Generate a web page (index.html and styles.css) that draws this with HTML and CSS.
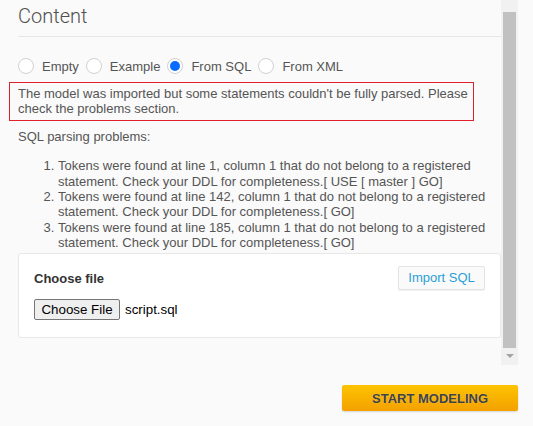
FILE: index.html
```html
<!DOCTYPE html>
<html>
<head>
<meta charset="utf-8">
<link rel="stylesheet" href="styles.css">
</head>
<body>
<div class="frame">
  <div class="viewport">
    <div class="content">
      <h2 class="heading">Content</h2>
      <div class="radios">
        <label class="radio"><span class="circle"></span><span>Empty</span></label>
        <label class="radio"><span class="circle"></span><span>Example</span></label>
        <label class="radio"><span class="circle checked"></span><span>From SQL</span></label>
        <label class="radio"><span class="circle"></span><span>From XML</span></label>
      </div>
      <div class="alert">The model was imported but some statements couldn't be fully parsed. Please check the problems section.</div>
      <p class="problems-title">SQL parsing problems:</p>
      <ol class="problems">
        <li>Tokens were found at line 1, column 1 that do not belong to a registered statement. Check your DDL for completeness.[ USE [ master ] GO]</li>
        <li>Tokens were found at line 142, column 1 that do not belong to a registered statement. Check your DDL for completeness.[ GO]</li>
        <li>Tokens were found at line 185, column 1 that do not belong to a registered statement. Check your DDL for completeness.[ GO]</li>
      </ol>
      <div class="card">
        <div class="card-head">
          <span class="card-title">Choose file</span>
          <button class="import-btn">Import SQL</button>
        </div>
        <div class="file-row">
          <button class="file-btn">Choose File</button>
          <span class="file-name">script.sql</span>
        </div>
      </div>
    </div>
    <div class="scrollbar">
      <div class="thumb"></div>
      <div class="arrow"></div>
    </div>
  </div>
  <div class="footer">
    <button class="start-btn">START MODELING</button>
  </div>
</div>
</body>
</html>
```
FILE: styles.css
```css
* { box-sizing: border-box; }
html, body { margin: 0; padding: 0; }
body {
  background: #fafafa;
  font-family: "Liberation Sans", Arial, sans-serif;
  color: #555;
  font-size: 13px;
  width: 533px;
  height: 426px;
  overflow: hidden;
}
.frame { display: flex; flex-direction: column; }
.viewport {
  display: flex;
  width: 518px;
  height: 365px;
  overflow: hidden;
}
.content {
  width: 501px;
  padding-left: 18px;
  flex: none;
}
.heading {
  margin: 0;
  padding-top: 4px;
  font-family: Roboto, "Liberation Sans", Arial, sans-serif;
  font-size: 20px;
  line-height: 24px;
  font-weight: 300;
  color: #505050;
  height: 37px;
  border-bottom: 1px solid #e6e6e6;
}
.radios {
  display: flex;
  align-items: center;
  gap: 7px;
  margin-top: 21px;
  height: 16px;
  font-size: 13px;
  color: #555;
}
.radio { display: flex; align-items: center; gap: 8px; }
.circle {
  width: 16px;
  height: 16px;
  border-radius: 50%;
  border: 1px solid #d0d0d0;
  background: #fff;
  display: flex;
  align-items: center;
  justify-content: center;
}
.circle.checked::after {
  content: "";
  width: 10px;
  height: 10px;
  border-radius: 50%;
  background: #0a6cff;
}
.alert {
  margin: 8px 0 0 -9px;
  width: 465px;
  border: 1px solid #e0202c;
  padding: 3px 2px 3px 8px;
  line-height: 15.4px;
  color: #555;
}
.problems-title {
  margin: 8px 0 0;
  line-height: 15.4px;
}
.problems {
  margin: 14px 0 0;
  padding-left: 40px;
  line-height: 15.4px;
}
.card {
  margin-top: 2px;
  background: #fff;
  border: 1px solid #e8e8e8;
  border-radius: 3px;
  padding: 12px 15px 17px 15px;
}
.card-head {
  display: flex;
  justify-content: space-between;
  align-items: center;
}
.card-title {
  font-size: 13px;
  font-weight: bold;
  color: #333;
  padding-top: 2px;
}
.import-btn {
  font-family: "Liberation Sans", Arial, sans-serif;
  font-size: 13px;
  color: #2a9fd8;
  background: #fafafa;
  border: 1px solid #e3e3e3;
  border-radius: 2px;
  height: 24px;
  width: 87px;
  padding: 0;
  box-shadow: 0 1px 1px rgba(0,0,0,0.06);
}
.file-row {
  margin-top: 9px;
  display: flex;
  align-items: center;
  gap: 5px;
}
.file-btn {
  font-family: "Liberation Sans", Arial, sans-serif;
  font-size: 13.33px;
  color: #000;
  background: #efefef;
  border: 1px solid #767676;
  border-radius: 2px;
  height: 21px;
  width: 86px;
  padding: 0;
}
.file-name {
  font-family: "Liberation Sans", Arial, sans-serif;
  font-size: 13.33px;
  color: #000;
}
.scrollbar {
  width: 17px;
  flex: none;
  background: #f1f1f1;
  display: flex;
  flex-direction: column;
  align-items: center;
  padding-top: 12px;
}
.thumb {
  width: 13px;
  height: 336px;
  background: #c1c1c1;
}
.arrow {
  margin-top: 6px;
  width: 0;
  height: 0;
  border-left: 4px solid transparent;
  border-right: 4px solid transparent;
  border-top: 4px solid #a3a3a3;
}
.footer {
  width: 518px;
  display: flex;
  justify-content: flex-end;
  margin-top: 20px;
}
.start-btn {
  width: 176px;
  height: 26px;
  border: none;
  border-radius: 2px;
  background: linear-gradient(#fdc400, #f4a000);
  font-family: "Liberation Sans", Arial, sans-serif;
  font-size: 13px;
  font-weight: bold;
  color: #404040;
  text-shadow: 0 0 1px rgba(255,255,255,0.5);
  box-shadow: 0 1px 2px rgba(0,0,0,0.15);
}
```
